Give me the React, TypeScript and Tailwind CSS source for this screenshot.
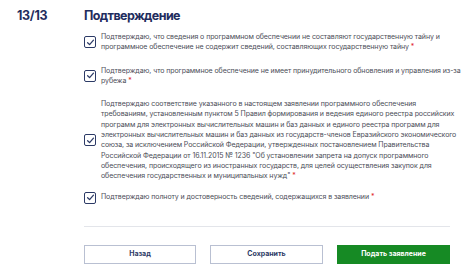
import React from "react";

const Check = () => (
  <div className="w-[12px] h-[12px] shrink-0 rounded-[2px] border-[1.5px] border-[#2c3a66] flex items-center justify-center">
    <svg width="9" height="9" viewBox="0 0 10 10">
      <path d="M1.8 5.2 L4 7.4 L8.3 2.4" fill="none" stroke="#2c3a66" strokeWidth="1.4" strokeLinecap="round" strokeLinejoin="round" />
    </svg>
  </div>
);

function Row({ lines, className = "" }: { lines: string[]; className?: string }) {
  return (
    <div className={"flex items-center gap-[5px] " + className}>
      <Check />
      <div className="text-[7px] leading-[10.3px] text-[#4b4d57] tracking-[-0.08px]">
        {lines.map((l, i) => (
          <div key={i} className="whitespace-nowrap">
            {l}
            {i === lines.length - 1 && <span className="text-[#e0262b]">&nbsp;*</span>}
          </div>
        ))}
      </div>
    </div>
  );
}

export default function App() {
  return (
    <div className="w-[474px] h-[270px] bg-white flex" style={{ fontFamily: "Inter, 'Noto Sans', sans-serif" }}>
      <div className="w-[84px] pl-[17px] pt-[8px] text-[12.5px] font-bold text-[#1f2d5e] leading-[16px] tracking-[-0.3px]">13/13</div>
      <div className="w-[366px] pt-[8px] flex flex-col">
        <h1 className="text-[12.5px] font-bold text-[#1f2d5e] leading-[16px] tracking-[-0.6px]">Подтверждение</h1>
        <Row
          className="mt-[8px]"
          lines={[
            "Подтверждаю, что сведения о программном обеспечении не составляют государственную тайну и",
            "программное обеспечение не содержит сведений, составляющих государственную тайну",
          ]}
        />
        <Row
          className="mt-[13px]"
          lines={[
            "Подтверждаю, что программное обеспечение не имеет принудительного обновления и управления из-за",
            "рубежа",
          ]}
        />
        <Row
          className="mt-[13px]"
          lines={[
            "Подтверждаю соответствие указанного в настоящем заявлении программного обеспечения",
            "требованиям, установленным пунктом 5 Правил формирования и ведения единого реестра российских",
            "программ для электронных вычислительных машин и баз данных и единого реестра программ для",
            "электронных вычислительных машин и баз данных из государств-членов Евразийского экономического",
            "союза, за исключением Российской Федерации, утвержденных постановлением Правительства",
            "Российской Федерации от 16.11.2015 № 1236 \"Об установлении запрета на допуск программного",
            "обеспечения, происходящего из иностранных государств, для целей осуществления закупок для",
            "обеспечения государственных и муниципальных нужд\"",
          ]}
        />
        <Row className="mt-[10px]" lines={["Подтверждаю полноту и достоверность сведений, содержащихся в заявлении"]} />
        <div className="mt-[22px] h-px bg-[#e3e5ea]" />
        <div className="mt-[18px] flex gap-[14px]">
          <button className="w-[112px] h-[19px] border border-[#b9c0d2] text-[7px] font-bold text-[#2c3a66]">Назад</button>
          <button className="w-[113px] h-[19px] border border-[#b9c0d2] text-[7px] font-bold text-[#2c3a66]">Сохранить</button>
          <button className="w-[113px] h-[19px] bg-[#168a24] text-[7px] font-bold text-white">Подать заявление</button>
        </div>
      </div>
    </div>
  );
}
